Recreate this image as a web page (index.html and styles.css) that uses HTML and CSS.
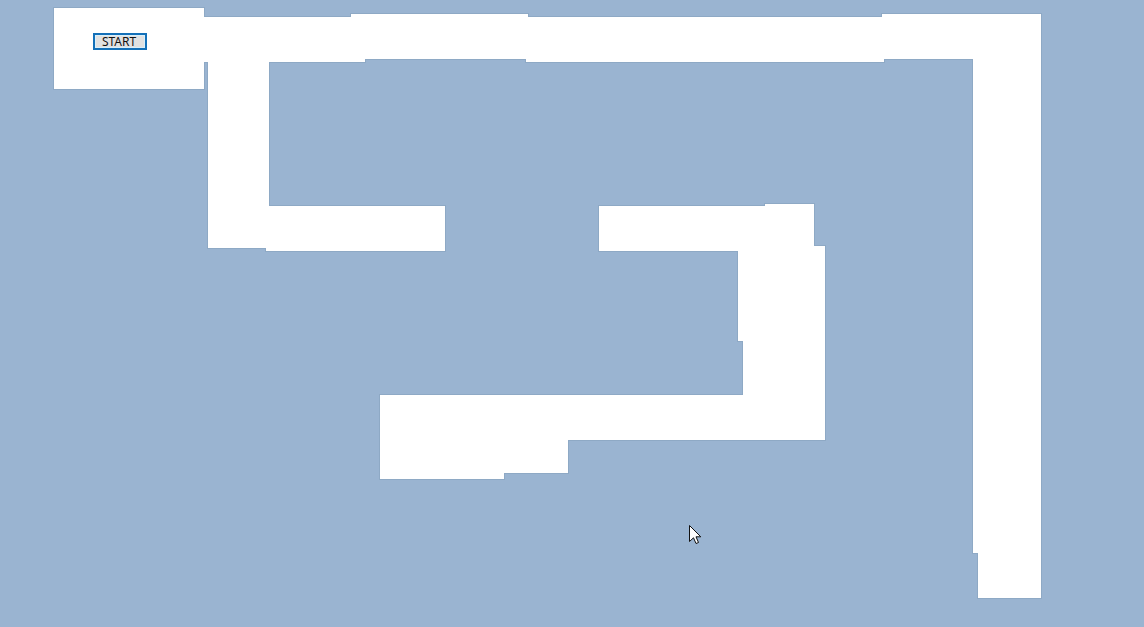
FILE: index.html
```html
<!DOCTYPE html>
<html lang="en">
<head>
  <meta charset="utf-8">
  <title>Maze</title>
  <link rel="stylesheet" href="styles.css">
</head>
<body>
  <main class="board">
    <svg class="maze" width="1144" height="627" viewBox="0 0 1144 627" aria-hidden="true">
      <!-- Upper path: start room, left branch, top corridor, right corridor -->
      <path class="corridor" d="M54 8H204V17H351V14H528V17H882V14H1041V598H978V553H973V59H884V62H526V59H365V62H269V206H445V251H266V248H208V62H204V89H54Z"/>
      <!-- Lower path -->
      <path class="corridor" d="M599 206H765V204H814V246H825V440H568V473H504V479H380V395H743V341H738V251H599Z"/>
    </svg>
    <section class="start-room">
      <button class="start-button" type="button">START</button>
    </section>
    <svg class="pointer" width="13" height="20" viewBox="0 0 13 20" aria-hidden="true">
      <path d="M.5 .5V16.5L4.5 12.8L7 18.5L9.5 17.5L7 11.8H11.8Z"/>
    </svg>
  </main>
</body>
</html>
```
FILE: styles.css
```css
body {
  margin: 0;
  background: #9ab4d1;
  font-family: "Noto Sans", "Open Sans", sans-serif;
}

.board {
  position: relative;
  min-height: 100vh;
  overflow: hidden;
}

.maze {
  position: absolute;
  top: 0;
  left: 0;
}

.corridor {
  fill: #fff;
  stroke: #8ea9c5;
  stroke-width: 2;
  paint-order: stroke;
  shape-rendering: crispEdges;
}

.start-room {
  position: relative;
  display: flex;
  padding: 33px 93px;
}

.start-button {
  width: 54px;
  height: 17px;
  padding: 1px 2px 0 0;
  border: 2px solid #1470b8;
  background: #e1e1e1;
  box-shadow: inset 0 0 0 1px #d9effa;
  color: #111;
  font: 12px/12px "Noto Sans", "Open Sans", sans-serif;
}

.pointer {
  position: absolute;
  top: 525px;
  left: 689px;
  fill: #fff;
  stroke: #111;
}
```
